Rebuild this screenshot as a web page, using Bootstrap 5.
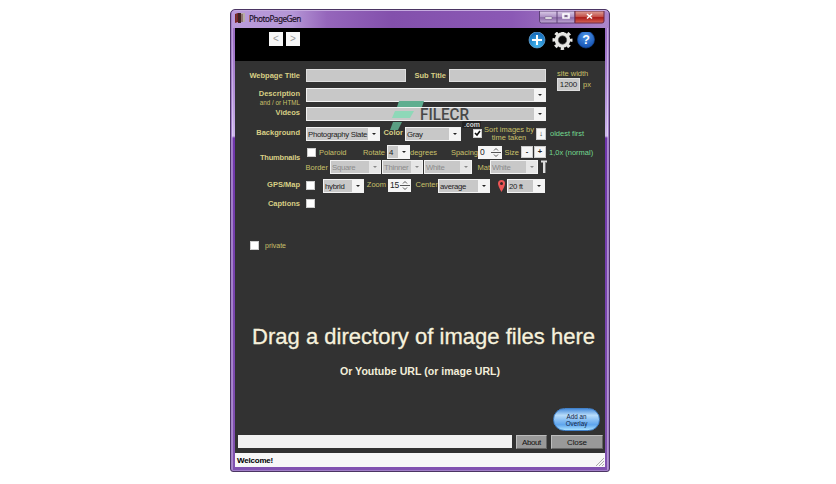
<!DOCTYPE html>
<html lang="en"><head><meta charset="utf-8"><title>PhotoPageGen</title>
<link href="https://cdn.jsdelivr.net/npm/bootstrap@5.3.0/dist/css/bootstrap.min.css" rel="stylesheet">
<script src="https://cdn.jsdelivr.net/npm/bootstrap@5.3.0/dist/js/bootstrap.bundle.min.js"></script>
<style>
body{background:#fff;font:7.5px/9px "Liberation Sans",Arial,sans-serif;width:836px;height:484px;overflow:hidden;color:#222}
.win{width:380px;height:463px;margin:9px 0 0 230px;padding:0 4px 4px;border:1px solid #4b3563;border-radius:5px 5px 3px 3px;
 background:linear-gradient(90deg,transparent 1px,#ffffff55 1px,#ffffff55 2px,transparent 2px,transparent 376px,#ffffff66 376px,#ffffff66 377px,transparent 377px),linear-gradient(#9a6fc2 0,#9a6cc4 28px,#b796dd 90px,#cdb6ec 126px,#6f35ab 128px,#8152b0 100%);box-shadow:inset 0 0 0 1px #a27fc9}
.tbar{height:18px;margin:0 -3px;padding:0 3px;background:linear-gradient(90deg,#b99bda 0,#b596d6 60px,#9566bb 95px,#8350ac 160px,#8b59b5 280px,#ab86ca 100%);border-top:1px solid #c6abe0;border-radius:4px 4px 0 0}
.ttl{font:8.2px/15px "Noto Sans","Open Sans",sans-serif;color:#1b1024;padding-left:4px;letter-spacing:-.5px;-webkit-text-stroke:.15px #1b1024}
.client{width:370px;height:439px;background:#323232}
.top{height:33px;background:#000;padding:4px 9px 0 34px}
.nb{width:14px;height:14px;background:#f7f7f7;color:#999;font:10px/14px "Liberation Sans",sans-serif;text-align:center;margin-right:3px}
.formarea{height:317px;padding-left:3px;color:#c9c06a}
.g{display:grid;align-items:center;white-space:nowrap}
.lb{font-weight:700;text-align:right;color:#d8cf85}
.t{text-align:right;padding-right:2px}
.tl{padding-left:3px}
.inp{background:#c8c8c8;border:1px solid #dedede;height:13px;color:#222}
.cb{position:relative;background:#c8c8c8;border:1px solid #f3f3f3;height:14px;color:#222;display:flex;line-height:13px;padding-left:1px;overflow:hidden;font-size:7.8px;letter-spacing:-.3px}
.cb::after{content:"";width:11px;flex:none;margin-left:auto;background:#f4f4f4}
.cb::before{content:"";position:absolute;right:3px;top:5px;border:2px solid transparent;border-top:2.5px solid #222;z-index:1;border-bottom:0}
.off{color:#8b8b8b}.off::before{border-top-color:#888}
.off::after{background:#e6e6e6}
.chk{width:9px;height:9px;background:#fff;border:1px solid #ccc;justify-self:start}
.grn{color:#73d990}
.sp{background:#f5f5f5;color:#222;height:13px;font-size:8.5px;line-height:13px;padding-left:2px;display:flex;justify-content:space-between;letter-spacing:-.3px}
.sq{background:#f6f6f6;border:1px solid #ccc;color:#222;height:12px;text-align:center;line-height:9px;font-weight:700}
.r1{grid-template-columns:62px 6px 100px 42px 1px 97px;width:308px}
.r2{grid-template-columns:62px 6px 240px;height:14px}
.r2 .lb{margin-top:-4px}
.desc{margin-top:6px}
.r4{grid-template-columns:62px 6px 74px 25px 56px 12px 11px 50px 2px 10px 4px 50px;height:17px;margin-top:4px}
.r4 .lb{margin-top:-2px}
.r5{grid-template-columns:69px 9px 31px 38px 2px 23px 27px 41px 24px 19px 12px 1px 12px 50px;height:14px;margin-top:3px}
.r6{grid-template-columns:90px 2px 51px 1px 41px 1px 48px 18px 48px 3px 7px;height:14px;margin-top:1px}
.r7{grid-template-columns:62px 6px 9px 8px 41px 24px 23px 27px 52px 8px 7px 2px 38px;height:15px;margin-top:4px}
.r7 .lb,.r7 .t{margin-top:-2px}
.r8{grid-template-columns:62px 6px 9px;height:12px;margin-top:4px}
.side{width:58px;height:51px;padding-left:11px}
.thumb{width:62px;line-height:9px;height:9px;margin-bottom:-10px;letter-spacing:-.2px}
.andhtml{font-size:6.3px;line-height:6px;height:6px;width:62px;text-align:right;margin-top:-2px;margin-bottom:1px;white-space:nowrap}
.w1200{width:23px;font-size:8px;line-height:11px;text-align:center;letter-spacing:-.1px}
.sort{line-height:8px;text-align:center}
.priv{margin:32px 0 0 12px;height:9px}.priv span+span{margin-left:6px;font-size:7px}
.big{font-size:22px;line-height:26px;color:#f6f1dc;white-space:nowrap;padding-left:14px;margin-top:74px;letter-spacing:.02px;-webkit-text-stroke:.3px #f6f1dc}
.sub{font-size:10.6px;line-height:13px;font-weight:700;color:#f3eeda;margin:15px 0 0 102px;white-space:nowrap}
.foot{height:75px;padding-top:30px}
.ov{width:47px;height:23px;border-radius:12px;margin:0 0 0 318px;background:linear-gradient(#4b8edb,#b8dcfa 30%,#84bcf3 55%,#5ea5ee 75%,#a8e0ff);border:1px solid #4282ca;color:#10233f;font-size:6.3px;line-height:7px;text-align:center;padding-top:4px}
.barx{margin:4px 0 0 3px}
.white{width:274px;height:13px;background:#f2f2f2;margin-right:4px}
.bb{height:14px;background:#999;border:1px solid #bdbdbd;border-right-color:#666;border-bottom-color:#666;color:#111;text-align:center;line-height:13px;font-size:8px;letter-spacing:-.1px}
.about{width:31px;margin-right:4px;letter-spacing:-.4px}.close2{width:52px}
.status{height:14px;background:#f7f7f7;color:#000;font-weight:700;font-size:8px;line-height:15px;padding-left:2px;letter-spacing:-.2px}
.mk{position:absolute;left:388px;top:98px}
</style></head><body>
<main class="win">
<div class="tbar d-flex align-items-start">
<svg width="10" height="12" viewBox="0 -2 10 12" style=""><path d="M0 1 3 0v9l-3 1z" fill="#7c2020"/><path d="M3 0h3v10H3z" fill="#3d2222"/><path d="M6 0h4v9H6z" fill="#b7aca7"/><path d="M7 1v8M1.500 1v7" stroke="#643d39"/></svg>
<span class="ttl flex-grow-1">PhotoPageGen</span>
<svg width="66" height="13" viewBox="0 0 66 13"><defs><linearGradient id="w" x2="0" y2="1"><stop stop-color="#ddcee9"/><stop offset=".5" stop-color="#ac90c4"/><stop offset=".55" stop-color="#8b6aa7"/><stop offset="1" stop-color="#c2aad5"/></linearGradient><linearGradient id="r" x2="0" y2="1"><stop stop-color="#dea39c"/><stop offset=".48" stop-color="#c45048"/><stop offset=".55" stop-color="#aa1b18"/><stop offset="1" stop-color="#d76a5c"/></linearGradient></defs><path d="M.5 0v10q0 2 2 2H36V0z" fill="url(#w)" stroke="#5e4278"/><path d="M36 0v12h27q2 0 2-2V0z" fill="url(#r)" stroke="#6d2940"/><path d="M18 0v12" stroke="#5e4278"/><path d="M6 6h7v2H6z" fill="#fff" stroke="#665477" stroke-width=".5"/><path d="M24 3h6v4h-6z" fill="none" stroke="#fff" stroke-width="1.6"/><path d="M26 4.500h2v1h-2z" fill="#444"/><path d="m48 3 5 4.500m0-4.500-5 4.500" stroke="#fff" stroke-width="1.600"/></svg>
</div>
<div class="client">
<header class="top d-flex"><div class="nb">&lt;</div><div class="nb me-auto">&gt;</div>
<svg width="74" height="24" viewBox="-1 -1 74 24"><defs><radialGradient id="b" cx=".5" cy=".8" r=".8"><stop stop-color="#43b7ee"/><stop offset="1" stop-color="#1264b5"/></radialGradient><radialGradient id="q" cx=".5" cy=".3" r=".7"><stop stop-color="#4f97ea"/><stop offset="1" stop-color="#1350b0"/></radialGradient></defs>
<circle cx="14" cy="7" r="8" fill="url(#b)" stroke="#7eb8e4" stroke-width=".6"/><path d="M14 2v10M9 7h10" stroke="#fff" stroke-width="2"/>
<g fill="none" stroke="#e6e6e3"><circle cx="39.500" cy="7" r="6" stroke-width="3.600"/><circle cx="39.500" cy="7" r="8.500" stroke-width="3" stroke-dasharray="3.300 3.376" stroke-dashoffset="1.650"/></g><circle cx="39.500" cy="7" r="4.300" fill="#080808" stroke="#999" stroke-width=".6"/>
<circle cx="63" cy="6.500" r="8.500" fill="url(#q)" stroke="#12438f" stroke-width=".7"/><text x="63" y="11" font-size="12.500" font-weight="700" fill="#fff" text-anchor="middle">?</text></svg>
</header>
<section class="formarea">
<div class="d-flex pt-2"><div>
<div class="g r1"><span class="lb">Webpage Title</span><i></i><span class="inp"></span><span class="lb t">Sub Title</span><i></i><span class="inp"></span></div>
<div class="g r2 desc"><span class="lb">Description</span><i></i><span class="cb"></span></div>
<div class="andhtml">and / or HTML</div>
<div class="g r2"><span class="lb">Videos</span><i></i><span class="cb"></span></div>
</div><div class="side"><div>site width</div><div class="d-flex align-items-center"><span class="inp w1200">1200</span><span class="tl">px</span></div></div></div>
<div class="g r4"><span class="lb">Background</span><i></i><span class="cb">Photography Slate</span><span class="lb t">Color</span><span class="cb">Gray</span><i></i><span class="chk"><svg width="7" height="7" viewBox="0 0 7 7" class="d-block"><path d="m1 3 2 2 3-4" fill="none" stroke="#111" stroke-width="1.600"/></svg></span><span class="sort">Sort images by<br>time taken</span><i></i><span class="sq">↓</span><i></i><span class="grn">oldest first</span></div>
<div class="g r5"><span class="lb thumb">Thumbnails</span><span class="chk"></span><span class="tl">Polaroid</span><span class="t pe-0">Rotate</span><i></i><span class="cb">4</span><span class="t">degrees</span><span class="t pe-0">Spacing</span><span class="sp">0<svg width="11" height="13"><path d="M0 6.500h10M3 4.500l2-2 2 2M3 8.500l2 2 2-2" fill="none" stroke="#555"/></svg></span><span class="t">Size</span><span class="sq">-</span><i></i><span class="sq">+</span><span class="grn tl">1,0x (normal)</span></div>
<div class="g r6"><span class="t pe-0">Border</span><i></i><span class="cb off">Square</span><i></i><span class="cb off">Thinner</span><i></i><span class="cb off">White</span><span class="t pe-0">Mat</span><span class="cb off">White</span><i></i><svg width="7" height="14"><path d="M0 1.500h6M3 2v11" fill="none" stroke="#ddd" stroke-width="2"/><path d="M4.500 3v10" stroke="#777"/></svg></div>
<div class="g r7"><span class="lb">GPS/Map</span><i></i><span class="chk"></span><i></i><span class="cb">hybrid</span><span class="t">Zoom</span><span class="sp">15<svg width="11" height="13"><path d="M0 6.500h10M3 4.500l2-2 2 2M3 8.500l2 2 2-2" fill="none" stroke="#555"/></svg></span><span class="t pe-0">Center</span><span class="cb">average</span><i></i><svg width="7" height="12" viewBox="0 0 7 12"><path d="M3.500 12Q0 6 0 3.500a3.500 3.500 0 0 1 7 0Q7 6 3.500 12z" fill="#ec5555"/><circle cx="3.500" cy="3.500" r="1.500" fill="#3a2525"/></svg><i></i><span class="cb">20 ft</span></div>
<div class="g r8"><span class="lb">Captions</span><i></i><span class="chk"></span></div>
<div class="d-flex align-items-center priv"><span class="chk"></span><span>private</span></div>
<div class="big">Drag a directory of image files here</div>
<div class="sub">Or Youtube URL (or image URL)</div>
</section>
<div class="foot"><div class="ov">Add an<br>Overlay</div>
<div class="d-flex barx"><span class="white"></span><span class="bb about">About</span><span class="bb close2">Close</span></div></div>
<footer class="status d-flex justify-content-between"><span>Welcome!</span><svg width="10" height="14"><path d="m1 13 8-8M4 13l5-5M7 13l2-2" stroke="#aaa"/></svg></footer>
</div></main>
<svg class="mk" width="96" height="34" viewBox="0 0 96 34"><path d="M11 3h25l-2 6H9z" fill="#5fae90"/><path d="M7 13h19l-4 7H4z" fill="#8ed8b8"/><path d="M5 24h9l-4 8H2z" fill="#5a9f83"/><text x="32" y="22" font-family="Roboto,sans-serif" font-weight="500" font-size="16" textLength="49" lengthAdjust="spacingAndGlyphs" fill="#484848">FILECR</text><rect x="74" y="23" width="19" height="7" rx="1.500" fill="#222"/><text x="76" y="29" font-family="Roboto,sans-serif" font-weight="700" font-size="7" textLength="16" lengthAdjust="spacingAndGlyphs" fill="#ccc">.com</text></svg>
</body></html>
